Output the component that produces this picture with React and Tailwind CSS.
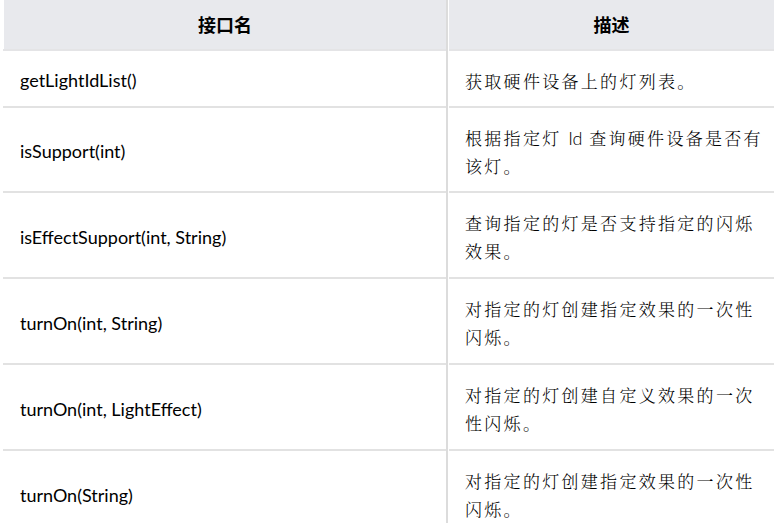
import React from "react";

const rows = [
  { name: "getLightIdList()", desc: ["获取硬件设备上的灯列表。"], h: "h-[57px]" },
  { name: "isSupport(int)", desc: [<>根据指定灯 <span className="font-['Lato','Noto_Sans',sans-serif] tracking-normal text-[18px]">Id</span> 查询硬件设备是否有</>, "该灯。"], h: "h-[85px]" },
  { name: "isEffectSupport(int, String)", desc: ["查询指定的灯是否支持指定的闪烁", "效果。"], h: "h-[86px]" },
  { name: "turnOn(int, String)", desc: ["对指定的灯创建指定效果的一次性", "闪烁。"], h: "h-[86px]" },
  { name: "turnOn(int, LightEffect)", desc: ["对指定的灯创建自定义效果的一次", "性闪烁。"], h: "h-[86px]" },
  { name: "turnOn(String)", desc: ["对指定的灯创建指定效果的一次性", "闪烁。"], h: "h-[86px]" },
];

export default function App() {
  return (
    <div className="w-[774px] h-[523px] overflow-hidden bg-white pl-[3px] text-black">
      <div className="flex h-[51px]">
        <div className="w-[443px] border-b-2 border-[#e4e4e6] pl-px">
          <div className="h-full bg-[#e8e9ed] flex items-center justify-center font-['Noto_Sans_CJK_SC',sans-serif] font-bold text-[18px]">
            接口名
          </div>
        </div>
        <div className="w-[2px] bg-[#dcdcdc]" />
        <div className="w-px" />
        <div className="flex-1 border-b-2 border-[#e4e4e6] bg-[#e8e9ed] flex items-center justify-center font-['Noto_Sans_CJK_SC',sans-serif] font-bold text-[18px]">
          描述
        </div>
      </div>
      {rows.map((r, i) => (
        <div key={i} className={`flex ${r.h}`}>
          <div className="w-[443px] border-b-2 border-[#e2e2e2] flex items-center pl-[17px] pt-[4px] font-['Lato','Noto_Sans',sans-serif] text-[18px]">
            {r.name}
          </div>
          <div className="w-[2px] bg-[#dcdcdc]" />
          <div className="w-px" />
          <div className="flex-1 border-b-2 border-[#e2e2e2] flex flex-col justify-center pl-[16px] pt-[4px] font-['Noto_Serif_CJK_SC','Noto_Sans_CJK_SC',serif] text-[17px] tracking-[2.3px] leading-[28px] font-light">
            {r.desc.map((l, j) => (
              <div key={j} className="whitespace-nowrap">{l}</div>
            ))}
          </div>
        </div>
      ))}
    </div>
  );
}
